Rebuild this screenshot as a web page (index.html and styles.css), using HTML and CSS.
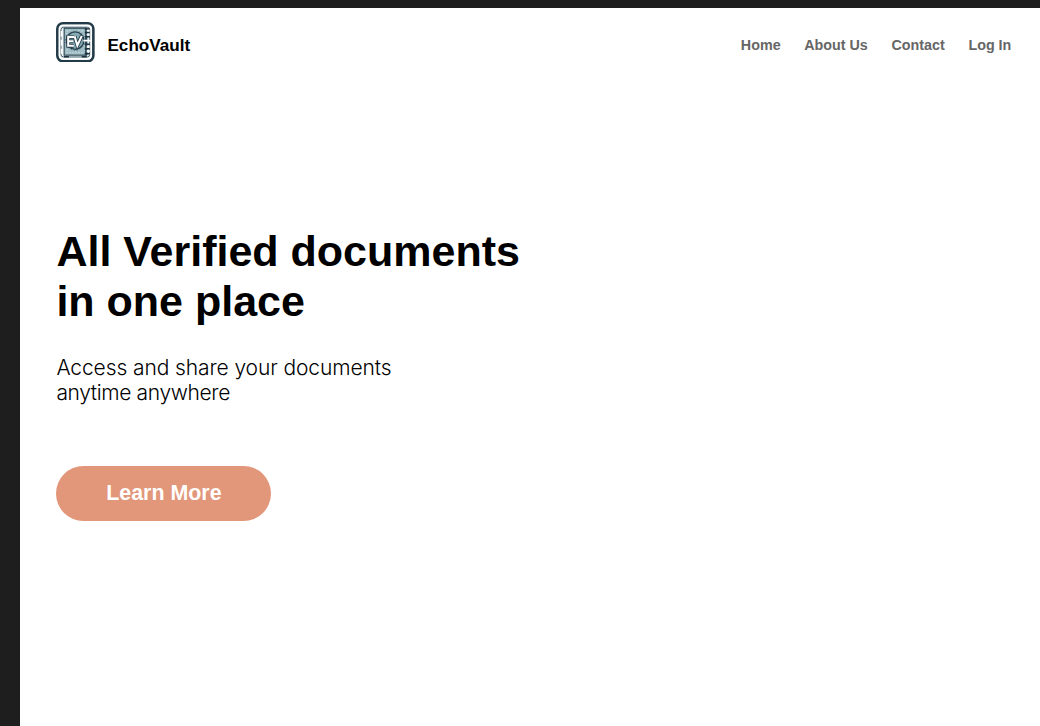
FILE: index.html
```html
<!DOCTYPE html>
<html lang="en">
<head>
<meta charset="utf-8">
<title>EchoVault</title>
<link rel="stylesheet" href="styles.css">
</head>
<body>
<div class="page">
  <header class="header">
    <a class="brand">
      <svg class="logo" viewBox="0 0 39 41" aria-hidden="true">
        <rect x="1.3" y="1.3" width="36.4" height="38.4" rx="5.5" fill="#e4eef0" stroke="#233b49" stroke-width="2.6"/>
        <rect x="3.5" y="3.6" width="32" height="33.6" rx="3.5" fill="none" stroke="#fff" stroke-width="1.5"/>
        <rect x="5" y="5.3" width="29" height="30" rx="2.5" fill="#e8f1f3" stroke="#3d5763" stroke-width="0.9"/>
        <path d="M5.6 9v6M5.6 18v6M5.6 27v5" stroke="#fff" stroke-width="1.6"/>
        <rect x="8.2" y="6.3" width="22.4" height="27.2" fill="#a0bdc5" stroke="#294451" stroke-width="1.1"/>
        <path d="M10.5 9h17M10.5 12h3M10.5 28h3M10.5 31h17" stroke="#c8dce0" stroke-width="1.1" stroke-dasharray="1.5 1.5"/>
        <circle cx="19.3" cy="18.8" r="8.8" fill="#86aab4" stroke="#233b49" stroke-width="1.4"/>
        <circle cx="19.3" cy="18.8" r="9.8" fill="none" stroke="#4a6773" stroke-width="1" stroke-dasharray="1.2 1.9"/>
        <path d="M30.5 6v27.5" stroke="#294451" stroke-width="2.2"/>
        <path d="M29 7h5M29 10.5h5M29 15h5M29 22.5h5M29 27h5M29 32h5" stroke="#1d3340" stroke-width="1.5"/>
        <path d="M31 8.8h3M31 12.8h3M27.5 18.8h7.5M31 25h3M31 29.3h3" stroke="#fff" stroke-width="1.8"/>
        <path d="M18.2 15H12.3V24H18M12.3 19.5H17.5M18.8 14.5l2.7 9.2L26 14" fill="none" stroke="#233b49" stroke-width="3.8"/>
        <path d="M18.2 15H12.3V24H18M12.3 19.5H17.5M18.8 14.5l2.7 9.2L26 14" fill="none" stroke="#fff" stroke-width="2.1"/>
        <path d="M8 34.3h5v1.5H8zM26 34h5v1.8h-5z" fill="#1d3340"/>
      </svg>
      <span class="brand-name">EchoVault</span>
    </a>
    <nav class="nav">
      <a>Home</a>
      <a>About Us</a>
      <a>Contact</a>
      <a>Log In</a>
    </nav>
  </header>
  <main class="hero">
    <h1 class="title">All Verified documents<br>in one place</h1>
    <p class="subtitle">Access and share your documents<br><span class="subtitle-end">anytime anywhere</span></p>
    <a class="button">Learn More</a>
  </main>
</div>
</body>
</html>
```
FILE: styles.css
```css
* {
  box-sizing: border-box;
}

body {
  margin: 0;
  height: 726px;
  overflow: hidden;
  padding: 7.5px 0 0 20px;
  background: #1e1e1e;
  font-family: "Liberation Sans", Arial, sans-serif;
}

.page {
  height: 100%;
  background: #fff;
}

.header {
  display: flex;
  justify-content: space-between;
  align-items: center;
  height: 75px;
  padding: 0 28.7px 6px 36.4px;
}

.brand {
  display: flex;
  align-items: center;
  gap: 12.4px;
}

.logo {
  width: 38.7px;
  height: 40.6px;
}

.brand-name {
  padding-top: 7px;
  font-size: 17.1px;
  line-height: 20px;
  font-weight: 700;
  color: #000;
}

.nav {
  display: flex;
  gap: 23.7px;
  padding-top: 5px;
  font-size: 14.3px;
  line-height: 18px;
  font-weight: 700;
  color: #666;
}

.hero {
  padding: 143px 36.4px 0;
}

.title {
  margin: 0;
  font-size: 43px;
  line-height: 50px;
  font-weight: 700;
  color: #000;
}

.subtitle {
  margin: 29px 0 61px;
  font-family: Inter, "Liberation Sans", sans-serif;
  font-size: 21px;
  line-height: 25px;
  font-weight: 300;
  letter-spacing: -0.1px;
  color: #000;
}

.subtitle-end {
  letter-spacing: -0.36px;
}

.button {
  display: flex;
  align-items: center;
  justify-content: center;
  width: 215px;
  height: 55px;
  padding-top: 1px;
  border-radius: 28px;
  background: #e2967a;
  color: #fff;
  font-size: 21.4px;
  font-weight: 700;
}
```
